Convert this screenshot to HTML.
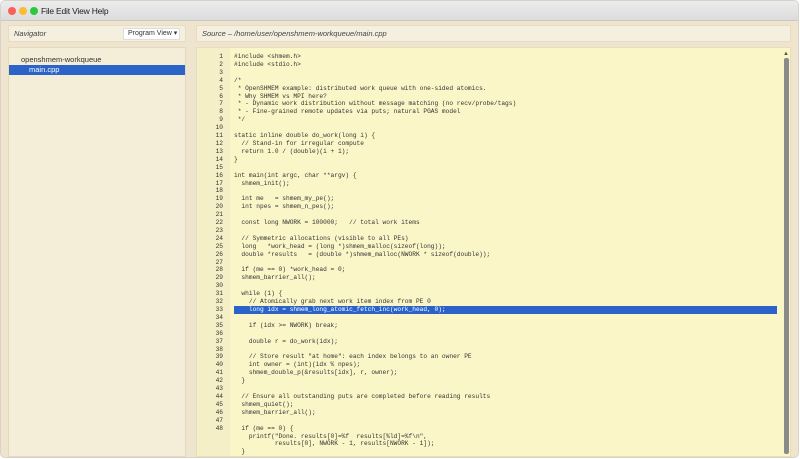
<!DOCTYPE html>
<html><head><meta charset="utf-8"><style>
*{margin:0;padding:0;box-sizing:border-box}
body{width:800px;height:459px;overflow:hidden;background:#fff;font-family:"Liberation Sans",sans-serif}
.win{position:absolute;left:0;top:0;width:799px;height:458px;background:#efe5cf;border:1px solid #d8d3c8;border-radius:5px;overflow:hidden}
.tb{position:absolute;left:0;top:0;right:0;height:20px;background:linear-gradient(#ececec,#dcdcdc);border-bottom:1px solid #c8c8c8}
.dot{position:absolute;top:6px;width:8px;height:8px;border-radius:50%}
.menu{position:absolute;left:40px;top:5px;font-size:8.5px;color:#222;letter-spacing:-0.2px}
.hdr{position:absolute;top:24px;height:17px;background:#f5efdf;border:1px solid #e6dcc4;font-size:7.5px;font-style:italic;color:#444;line-height:15px;padding-left:5px;white-space:nowrap}
.btn{position:absolute;right:5px;top:2px;height:12px;width:57px;background:#fff;border:1px solid #ddd;font-style:normal;font-size:7px;line-height:10px;padding-left:4px;color:#333;white-space:nowrap;overflow:hidden}
.tree{position:absolute;left:7px;top:46px;width:178px;height:410px;background:#f4edd8;border:1px solid #e4d9bf;font-size:7.5px;color:#333}
.code{position:absolute;left:195px;top:46px;width:595px;height:410px;background:#fbf6c8;border:1px solid #e8dfb8;overflow:hidden}
.gut{position:absolute;left:0;top:0;width:33px;height:100%;background:#f5efc8}
.ln{position:absolute;left:0;top:5px;width:26px;text-align:right}
.src{position:absolute;left:37px;top:5px;width:543px}
.ln div,.src div{height:7.92px;line-height:7.92px;font-family:"Liberation Mono",monospace;font-size:6.2px;color:#333;white-space:pre}
.src .hl{background:#2a62c9;color:#fff}
.sb{position:absolute;left:587px;top:10px;width:5px;height:396px;background:#8a8a8a;border-radius:2px}
</style></head><body><div class="win">
<div class="tb"><div class="dot" style="left:7px;background:#fc5f57"></div><div class="dot" style="left:18px;background:#fdbc2e"></div><div class="dot" style="left:29px;background:#29c840"></div><div class="menu">File Edit View Help</div></div>
<div class="hdr" style="left:7px;width:178px">Navigator<div class="btn">Program View ▾</div></div>
<div class="hdr" style="left:195px;width:595px">Source – /home/user/openshmem-workqueue/main.cpp</div>
<div class="tree"><div style="position:absolute;left:12px;top:7px">openshmem-workqueue</div><div style="position:absolute;left:0;top:17px;width:176px;height:10px;background:#2b63c8;color:#fff;padding-left:20px;line-height:10px">main.cpp</div></div>
<div class="code"><div class="gut"></div>
<div class="ln"><div>1</div><div>2</div><div>3</div><div>4</div><div>5</div><div>6</div><div>7</div><div>8</div><div>9</div><div>10</div><div>11</div><div>12</div><div>13</div><div>14</div><div>15</div><div>16</div><div>17</div><div>18</div><div>19</div><div>20</div><div>21</div><div>22</div><div>23</div><div>24</div><div>25</div><div>26</div><div>27</div><div>28</div><div>29</div><div>30</div><div>31</div><div>32</div><div>33</div><div>34</div><div>35</div><div>36</div><div>37</div><div>38</div><div>39</div><div>40</div><div>41</div><div>42</div><div>43</div><div>44</div><div>45</div><div>46</div><div>47</div><div>48</div></div>
<div class="src"><div>#include &lt;shmem.h&gt;</div><div>#include &lt;stdio.h&gt;</div><div> </div><div>/*</div><div> * OpenSHMEM example: distributed work queue with one-sided atomics.</div><div> * Why SHMEM vs MPI here?</div><div> * - Dynamic work distribution without message matching (no recv/probe/tags)</div><div> * - Fine-grained remote updates via puts; natural PGAS model</div><div> */</div><div> </div><div>static inline double do_work(long i) {</div><div>  // Stand-in for irregular compute</div><div>  return 1.0 / (double)(i + 1);</div><div>}</div><div> </div><div>int main(int argc, char **argv) {</div><div>  shmem_init();</div><div> </div><div>  int me   = shmem_my_pe();</div><div>  int npes = shmem_n_pes();</div><div> </div><div>  const long NWORK = 100000;   // total work items</div><div> </div><div>  // Symmetric allocations (visible to all PEs)</div><div>  long   *work_head = (long *)shmem_malloc(sizeof(long));</div><div>  double *results   = (double *)shmem_malloc(NWORK * sizeof(double));</div><div> </div><div>  if (me == 0) *work_head = 0;</div><div>  shmem_barrier_all();</div><div> </div><div>  while (1) {</div><div>    // Atomically grab next work item index from PE 0</div><div class="hl">    long idx = shmem_long_atomic_fetch_inc(work_head, 0);</div><div> </div><div>    if (idx &gt;= NWORK) break;</div><div> </div><div>    double r = do_work(idx);</div><div> </div><div>    // Store result "at home": each index belongs to an owner PE</div><div>    int owner = (int)(idx % npes);</div><div>    shmem_double_p(&amp;results[idx], r, owner);</div><div>  }</div><div> </div><div>  // Ensure all outstanding puts are completed before reading results</div><div>  shmem_quiet();</div><div>  shmem_barrier_all();</div><div> </div><div>  if (me == 0) {</div><div>    printf("Done. results[0]=%f  results[%ld]=%f\n",</div><div>           results[0], NWORK - 1, results[NWORK - 1]);</div><div>  }</div></div>
<div style="position:absolute;left:586px;top:3px;font-size:6px;color:#555">▲</div>
<div class="sb"></div></div>
</div></body></html>
